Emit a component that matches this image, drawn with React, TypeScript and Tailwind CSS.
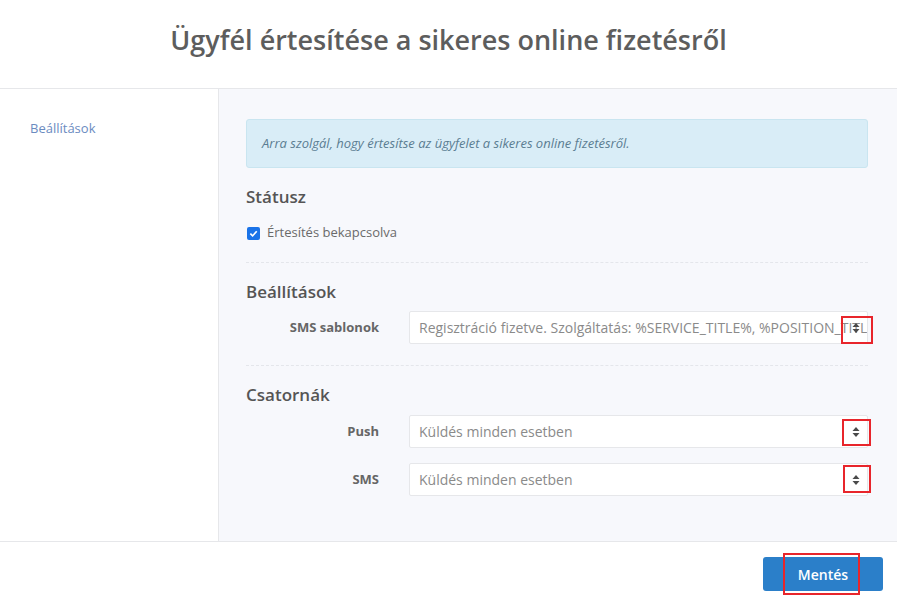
import React from 'react';

const SelectArrows: React.FC = () => (
  <svg width="8" height="12" viewBox="0 0 8 12" className="absolute right-[7px] top-1/2 -translate-y-1/2">
    <path d="M4 1 L7.5 5 L0.5 5 Z" fill="#4a4a4a" />
    <path d="M4 11 L7.5 7 L0.5 7 Z" fill="#4a4a4a" />
  </svg>
);

interface FieldProps {
  label: string;
  value: string;
  highlight: string;
}

const Field: React.FC<FieldProps> = ({ label, value, highlight }) => (
  <div className="grid grid-cols-[133px_minmax(0,1fr)] gap-x-[30px] items-center">
    <div className="text-right text-[13px] font-bold text-[#666]">{label}</div>
    <div className="relative min-w-0 h-[33px] bg-white border border-[#e6e7ea] rounded-[2px]">
      <div className="h-full flex items-center pl-[9px] pr-[5px] overflow-hidden whitespace-nowrap text-[14px] text-[#8a8a8a]">
        {value}
      </div>
      <SelectArrows />
      <div className={`absolute border-2 border-[#e8252b] ${highlight}`} />
    </div>
  </div>
);

const App: React.FC = () => {
  return (
    <div className="w-[897px] h-[602px] bg-white flex flex-col font-['Open_Sans',sans-serif]">
      <div className="h-[89px] shrink-0 border-b border-[#e6e7ea] flex justify-center pt-[22px]">
        <h1 className="text-[27px] leading-[36px] font-semibold text-[#5d5d5d]">
          Ügyfél értesítése a sikeres online fizetésről
        </h1>
      </div>

      <div className="h-[452px] shrink-0 flex">
        <div className="w-[219px] shrink-0 border-r border-[#e6e7ea] pt-[26px] pl-[30px]">
          <a className="text-[13px] leading-[18px] text-[#6b8bbf]">Beállítások</a>
        </div>

        <div className="flex-1 min-w-0 bg-[#f7f8fc] pt-[30px] pl-[27px] pr-[29px]">
          <div className="h-[49px] flex items-center px-[15px] bg-[#d9edf7] border border-[#c9e5f0] rounded-[3px] text-[13px] italic text-[#5b7d92]">
            Arra szolgál, hogy értesítse az ügyfelet a sikeres online fizetésről.
          </div>

          <h3 className="mt-[19px] text-[17px] leading-[20px] font-semibold text-[#555]">Státusz</h3>
          <label className="mt-[16px] h-[20px] flex items-center gap-[7px] pl-[1px] text-[13px] text-[#6a6a6a]">
            <span className="w-[13px] h-[13px] rounded-[2px] bg-[#1a73e8] flex items-center justify-center">
              <svg width="9" height="9" viewBox="0 0 10 10">
                <path d="M1.5 5.2 L4 7.7 L8.6 2.4" stroke="white" strokeWidth="1.8" fill="none" />
              </svg>
            </span>
            Értesítés bekapcsolva
          </label>

          <div className="mt-[19px] border-t border-dashed border-[#e4e6eb]" />

          <h3 className="mt-[19px] text-[17px] leading-[20px] font-semibold text-[#555]">Beállítások</h3>
          <div className="mt-[9px]">
            <Field
              label="SMS sablonok"
              value="Regisztráció fizetve. Szolgáltatás: %SERVICE_TITLE%, %POSITION_TITLE%"
              highlight="right-[-6px] top-[4px] w-[32px] h-[28px]"
            />
          </div>

          <div className="mt-[21px] border-t border-dashed border-[#e4e6eb]" />

          <h3 className="mt-[19px] text-[17px] leading-[20px] font-semibold text-[#555]">Csatornák</h3>
          <div className="mt-[10px] flex flex-col gap-[15px]">
            <Field
              label="Push"
              value="Küldés minden esetben"
              highlight="right-[-4px] top-[3px] w-[29px] h-[27px]"
            />
            <Field
              label="SMS"
              value="Küldés minden esetben"
              highlight="right-[-4px] top-[1px] w-[28px] h-[28px]"
            />
          </div>
        </div>
      </div>

      <div className="flex-1 border-t border-[#e6e7ea] flex justify-end items-start pt-[15px] pr-[14px]">
        <button className="relative w-[120px] h-[34px] bg-[#2b7fc9] rounded-[3px] text-white text-[14px] font-semibold">
          Mentés
          <span className="absolute left-[20px] top-[-4px] w-[77px] h-[42px] border-2 border-[#e8252b]" />
        </button>
      </div>
    </div>
  );
};

export default App;
